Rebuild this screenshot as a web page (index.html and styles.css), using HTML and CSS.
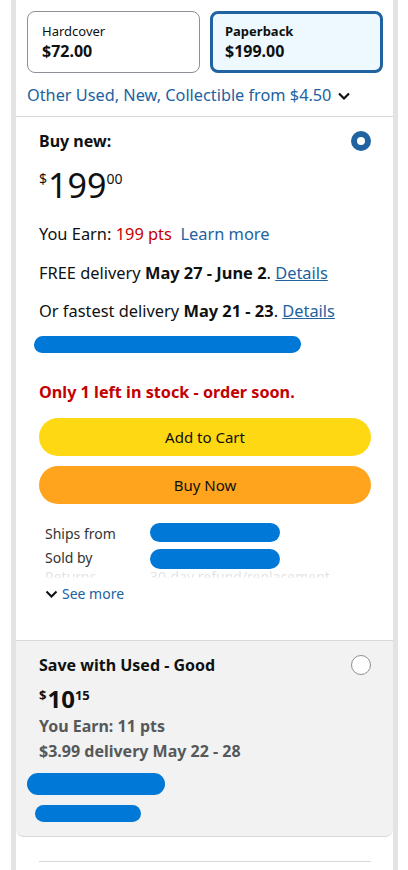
FILE: index.html
```html
<!DOCTYPE html>
<html>
<head>
<meta charset="utf-8">
<link rel="stylesheet" href="styles.css">
</head>
<body>
<div class="page">
  <section class="formats">
    <div class="format-row">
      <div class="format">
        <div class="format-name">Hardcover</div>
        <div class="format-price">$72.00</div>
      </div>
      <div class="format selected">
        <div class="format-name">Paperback</div>
        <div class="format-price">$199.00</div>
      </div>
    </div>
    <div class="other-offers">Other Used, New, Collectible from $4.50
      <svg class="chev" width="14" height="10" viewBox="0 0 14 10"><path d="M2 2.5 L7 7.5 L12 2.5" fill="none" stroke="#0f1111" stroke-width="2.2"/></svg>
    </div>
  </section>

  <section class="offer new">
    <div class="offer-head">
      <div class="offer-title">Buy new:</div>
      <span class="radio on"></span>
    </div>
    <div class="price big"><span class="sym">$</span><span class="whole">199</span><span class="frac">00</span></div>
    <p class="line">You Earn: <span class="pts">199 pts</span> &nbsp;<span class="link">Learn more</span></p>
    <p class="line">FREE delivery <b>May 27 - June 2</b>. <span class="link u">Details</span></p>
    <p class="line">Or fastest delivery <b>May 21 - 23</b>. <span class="link u">Details</span></p>
    <div class="scribble s1"></div>
    <p class="stock">Only 1 left in stock - order soon.</p>
    <div class="btn cart">Add to Cart</div>
    <div class="btn buy">Buy Now</div>
    <div class="info">
      <div class="info-row"><span class="lab">Ships from</span><span class="val"><span class="scribble s2"></span></span></div>
      <div class="info-row"><span class="lab">Sold by</span><span class="val"><span class="scribble s3"></span></span></div>
      <div class="info-row faded"><span class="lab">Returns</span><span class="val">30-day refund/replacement</span></div>
    </div>
    <div class="see-more">
      <svg width="13" height="9" viewBox="0 0 13 9"><path d="M1.5 1.5 L6.5 6.5 L11.5 1.5" fill="none" stroke="#0f1111" stroke-width="2"/></svg>
      <span>See more</span>
    </div>
  </section>

  <section class="offer used">
    <div class="offer-head">
      <div class="offer-title">Save with Used - Good</div>
      <span class="radio"></span>
    </div>
    <div class="price small"><span class="sym">$</span><span class="whole">10</span><span class="frac">15</span></div>
    <p class="gline">You Earn: 11 pts</p>
    <p class="gline">$3.99 delivery May 22 - 28</p>
    <div class="scribble s4"></div>
    <div class="scribble s5"></div>
  </section>

  <section class="tail">
    <div class="rule"></div>
  </section>
</div>
</body>
</html>
```

FILE: styles.css
```css
* { box-sizing: border-box; }
html, body { margin: 0; padding: 0; background: #fff; }
body {
  font-family: "Noto Sans", "Open Sans", Arial, sans-serif;
  color: #0f1111;
  width: 408px;
  height: 870px;
  overflow: hidden;
}
.page {
  margin-left: 11px;
  width: 387px;
  border-left: 5px solid #e3e3e3;
  border-right: 5px solid #e3e3e3;
  min-height: 870px;
}
.formats {
  padding: 11px 10px 0 11px;
  border-bottom: 1px solid #d5d9d9;
  height: 117px;
}
.format-row { display: flex; gap: 10px; }
.format {
  flex: 1;
  height: 62px;
  border: 1px solid #8d9096;
  border-radius: 8px;
  padding: 11px 14px 0 14px;
}
.format.selected {
  border: 3px solid #2162a1;
  background: #edf8ff;
  padding: 9px 12px 0 12px;
}
.format-name { font-size: 13px; line-height: 17px; }
.format.selected .format-name { font-weight: bold; }
.format-price { font-size: 16px; font-weight: bold; line-height: 22px; }
.other-offers {
  margin-top: 11px;
  color: #2162a1;
  font-size: 16.3px;
  line-height: 22px;
  display: flex;
  align-items: center;
}
.chev { margin-left: 6px; margin-top: 2px; }

.offer { padding: 0 22px 0 23px; }
.offer.new { height: 524px; border-bottom: 1px solid #d5d9d9; padding-top: 12px; }
.offer-head { display: flex; justify-content: space-between; align-items: center; height: 24px; }
.offer-title { font-size: 16px; font-weight: bold; }
.radio {
  width: 20px; height: 20px; border-radius: 50%;
  border: 1px solid #8d9096; background: #fff;
}
.radio.on { border: 6px solid #2162a1; }

.price { display: flex; align-items: flex-start; }
.price.big { margin-top: 12px; height: 40px; }
.price.big .sym { font-size: 14px; margin-top: 4px; margin-right: 1px; }
.price.big .whole { font-size: 34px; line-height: 40px; }
.price.big .frac { font-size: 14px; margin-top: 4px; }

.line { margin: 0; font-size: 16.4px; line-height: 22px; }
.price.big + .line { margin-top: 18px; }
.line + .line { margin-top: 16.5px; }
.pts { color: #c40000; }
.link { color: #2162a1; }
.link.u { text-decoration: underline; }

.scribble { display: block; background: #0078d7; border-radius: 10px; }
.s1 { width: 267px; height: 17px; margin: 14px 0 0 -5px; border-radius: 9px; transform: skewX(-3deg); }
.stock { margin: 28px 0 0; font-size: 16.2px; line-height: 22px; font-weight: bold; color: #c40000; }
.btn {
  height: 38px; border-radius: 19px;
  display: flex; align-items: center; justify-content: center;
  font-size: 15px;
}
.cart { background: #ffd814; margin-top: 15px; }
.buy { background: #ffa41c; margin-top: 10px; }

.info { margin-top: 18px; padding-left: 6px; }
.info-row { display: flex; font-size: 14px; line-height: 24px; color: #333; }
.lab { width: 105px; flex: none; }
.val { position: relative; flex: 1; }
.faded {
  line-height: 14px;
  height: 14px;
  margin-top: 0;
  opacity: 0.14;
  -webkit-mask-image: linear-gradient(to bottom, #000 0, #000 45%, transparent 60%);
  mask-image: linear-gradient(to bottom, #000 0, #000 45%, transparent 60%);
}
.s2 { position: absolute; left: 0; top: 1px; width: 130px; height: 19px; }
.s3 { position: absolute; left: 0; top: 3px; width: 130px; height: 20px; }
.see-more { display: flex; align-items: center; padding-left: 6px; margin-top: 0; font-size: 14px; line-height: 20px; color: #2162a1; }
.see-more svg { margin-right: 4px; }

.offer.used {
  background: #f2f2f2;
  border-radius: 0 0 8px 8px;
  border-bottom: 1px solid #d5d9d9;
  padding-top: 12px;
  height: 196px;
}
.price.small { margin-top: 7px; font-weight: bold; height: 30px; }
.price.small .sym { font-size: 13px; margin-top: 2px; margin-right: 1px; }
.price.small .whole { font-size: 24px; line-height: 30px; }
.price.small .frac { font-size: 13px; margin-top: 2px; }
.gline { margin: 0; font-size: 16px; line-height: 22px; font-weight: bold; color: #565959; }
.gline:first-of-type { margin-top: 1px; }
.gline + .gline { margin-top: 3px; }
.s4 { width: 138px; height: 22px; margin: 11px 0 0 -12px; border-radius: 11px; }
.s5 { width: 106px; height: 17px; margin: 10px 0 0 -4px; border-radius: 9px; }

.tail { padding: 24px 22px 0 23px; }
.rule { border-top: 1px solid #d5d9d9; }
```
